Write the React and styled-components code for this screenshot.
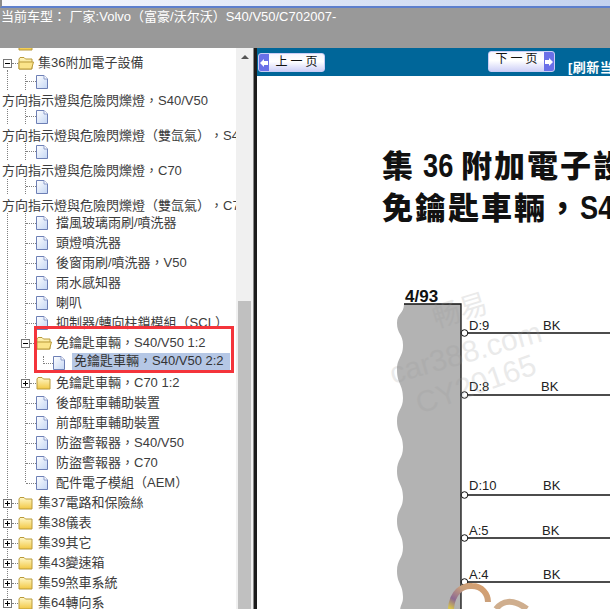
import React from 'react';
import styled, { createGlobalStyle } from 'styled-components';

const CJK = '"Liberation Sans", "Noto Sans CJK TC", sans-serif';

const GlobalStyle = createGlobalStyle`
  html, body { margin: 0; padding: 0; background: #fff; overflow: hidden; }
  #root { width: 610px; height: 609px; overflow: hidden; }
`;

const Page = styled.div`
  width: 610px;
  height: 609px;
  display: flex;
  flex-direction: column;
  overflow: hidden;
  font-family: ${CJK};
  text-spacing-trim: space-all;
`;

const TitleStrip = styled.div`
  height: 6px;
  flex: none;
  background: linear-gradient(90deg, #f8f9fd, #c3d2ef);
  border-bottom: 2px solid #5d7fcd;
  border-left: 2px solid #8a8a8a;
`;

const CarBar = styled.div`
  height: 40px;
  flex: none;
  background: #999;
  color: #fff;
  font-size: 13px;
  line-height: 18px;
  padding: 0 0 0 1px;
  white-space: pre;
`;

const Split = styled.div`
  flex: 1;
  min-height: 0;
  display: flex;
`;

const TreePane = styled.div`
  position: relative;
  width: 236px;
  flex: none;
  overflow: hidden;
  background: #fff;
`;

const Guide = styled.div`
  position: absolute;
  left: ${p => p.$x}px;
  top: ${p => p.$top}px;
  height: ${p => p.$height}px;
  border-left: 1px dotted #808080;
`;

const Row = styled.div`
  position: relative;
  height: ${p => p.$h || 20}px;
  display: flex;
  align-items: center;
  padding-left: ${p => p.$indent || 0}px;
  font-size: 13px;
  color: #3c3c3c;
  white-space: nowrap;
`;

const WrappedRow = styled(Row)`
  background: #fff;
`;

const TopRow = styled(Row)`
  margin-top: 2px;
`;

const ClippedRow = styled(Row)`
  align-items: flex-end;
  overflow: hidden;
  height: 3px;
  padding-left: 18px;
`;

const Expander = styled.span`
  position: relative;
  width: 9px;
  height: 9px;
  flex: none;
  box-sizing: border-box;
  border: 1px solid #777;
  background: #fff;
  &::before {
    content: '';
    position: absolute;
    left: 1px;
    right: 1px;
    top: 3px;
    height: 1px;
    background: #000;
  }
  &::after {
    content: '';
    display: ${p => (p.$open ? 'none' : 'block')};
    position: absolute;
    top: 1px;
    bottom: 1px;
    left: 3px;
    width: 1px;
    background: #000;
  }
`;

const Connector = styled.span`
  width: ${p => p.$w}px;
  flex: none;
  border-top: 1px dotted #808080;
`;

const Label = styled.span`
  margin-left: ${p => p.$gap ?? 4}px;
  padding-bottom: 4px;
`;

const Selected = styled.span`
  margin: 0 0 3px 7px;
  padding: 0 6px 0 2px;
  height: 17px;
  line-height: 15px;
  background: #b5c7e5;
  color: #333;
`;

const RedFrame = styled.div`
  position: absolute;
  left: 34px;
  top: 278px;
  width: 200px;
  height: 47px;
  box-sizing: border-box;
  border: 3px solid #f4343b;
`;

const ScrollTrack = styled.div`
  width: 17px;
  flex: none;
  background: #f0f0f0;
  display: flex;
  flex-direction: column;
  align-items: center;
  padding-top: 7px;
  box-sizing: border-box;
`;

const ScrollArrow = styled.div`
  width: 0;
  height: 0;
  border-left: 4px solid transparent;
  border-right: 4px solid transparent;
  border-bottom: 4px solid #555;
`;

const ScrollThumb = styled.div`
  width: 13px;
  margin-top: 242px;
  flex: 1;
  background: #c0c0c0;
`;

const Divider = styled.div`
  width: 4px;
  flex: none;
  background: #1c1c1c;
  border-left: 1px solid #888;
  box-sizing: border-box;
`;

const DocPane = styled.div`
  flex: 1;
  min-width: 0;
  display: flex;
  flex-direction: column;
  overflow: hidden;
`;

const NavBar = styled.div`
  height: 28px;
  flex: none;
  background: #006699;
  display: flex;
  align-items: flex-start;
  white-space: nowrap;
`;

const PageButton = styled.div`
  width: 67px;
  height: ${p => (p.$next ? 21 : 19)}px;
  margin: ${p => (p.$next ? '3px 0 0 163px' : '5px 0 0 1px')};
  flex: none;
  box-sizing: border-box;
  display: flex;
  flex-direction: ${p => (p.$next ? 'row-reverse' : 'row')};
  align-items: stretch;
  border: 1px solid #c9ccf5;
  border-radius: 3px;
  overflow: hidden;
  background: linear-gradient(#f6f6ff, #ffffff 45%, #cfd1f7);
  font-size: 12px;
  color: #111;
`;

const ArrowCap = styled.span`
  width: 10px;
  flex: none;
  background: #6a70e8;
  display: flex;
  align-items: center;
  justify-content: center;
`;

const ButtonText = styled.span`
  flex: 1;
  text-align: center;
  line-height: ${p => (p.$next ? 15 : 17)}px;
  letter-spacing: 3px;
  padding-left: 3px;
`;

const Refresh = styled.div`
  margin: 12px 0 0 13px;
  flex: none;
  font-size: 13px;
  line-height: 15px;
  font-weight: 700;
  color: #fff;
  letter-spacing: 0.5px;
`;

const Sheet = styled.div`
  position: relative;
  flex: 1;
  min-height: 0;
  background: #fff;
  padding: 67px 0 0 125px;
  overflow: hidden;
`;

const Heading = styled.div`
  font-family: "Noto Sans CJK TC", sans-serif;
  font-size: 31px;
  line-height: 42px;
  height: 42px;
  font-weight: 900;
  color: #111;
  white-space: nowrap;
  letter-spacing: 2px;
`;

const Condensed = styled.span`
  display: inline-block;
  width: ${p => p.$w}px;
  margin: ${p => p.$margin || 0};
  font-family: "Liberation Sans", sans-serif;
  font-size: 34px;
  line-height: 34px;
  font-weight: 700;
  letter-spacing: 0;
  transform: scaleX(0.8);
  transform-origin: left center;
`;

const Diagram = styled.svg`
  position: absolute;
  left: 0;
  top: 0;
`;

const IconDefs = () => (
  <svg width="0" height="0" style={{ position: 'absolute' }}>
    <defs>
      <linearGradient id="fold" x1="0" y1="0" x2="0" y2="1">
        <stop offset="0" stopColor="#fff8c8" />
        <stop offset="1" stopColor="#f2c844" />
      </linearGradient>
      <linearGradient id="page" x1="0" y1="0" x2="1" y2="1">
        <stop offset="0" stopColor="#ffffff" />
        <stop offset="1" stopColor="#c4d6f4" />
      </linearGradient>
      <linearGradient id="ring" x1="0" y1="1" x2="1" y2="0">
        <stop offset="0" stopColor="#d9c64a" />
        <stop offset="0.25" stopColor="#8d6a92" />
        <stop offset="0.6" stopColor="#c9a07c" />
        <stop offset="1" stopColor="#d99f6c" />
      </linearGradient>
    </defs>
  </svg>
);

const Folder = ({ open }) => (
  <svg width="16" height="14" viewBox="0 0 16 14" style={{ flex: 'none' }}>
    <path d="M1 3 L2 1.5 H6 L7.5 3 H14 V13 H1 Z" fill="url(#fold)" stroke="#b99a3a" />
    {open && <path d="M1 6 H15.5 L13.5 13 H1 Z" fill="#fbe48a" stroke="#b99a3a" />}
  </svg>
);

const DocIcon = () => (
  <svg width="12" height="14" viewBox="0 0 12 14" style={{ flex: 'none' }}>
    <path d="M.5.5 H8 L11.5 4 V13.5 H.5 Z" fill="url(#page)" stroke="#6d7fb5" />
    <path d="M8 .5 V4 H11.5" fill="#fff" stroke="#8c9ccb" />
  </svg>
);

const Leaf = ({ text }) => (
  <Row $indent={26}>
    <Connector $w={10} />
    <DocIcon />
    <Label $gap={8}>{text}</Label>
  </Row>
);

const Section = ({ text }) => (
  <Row $indent={3}>
    <Expander />
    <Connector $w={6} />
    <Folder />
    <Label>{text}</Label>
  </Row>
);

const OrphanIcon = () => (
  <Row $h={17} $indent={26}>
    <Connector $w={10} />
    <DocIcon />
  </Row>
);

const ArrowIcon = ({ flip }) => (
  <svg width="8" height="8" viewBox="0 0 8 8" style={flip ? { transform: 'scaleX(-1)' } : undefined}>
    <path d="M0 4 L4 0 V2 H8 V6 H4 V8 Z" fill="#fff" />
  </svg>
);

const leavesA = ['擋風玻璃雨刷/噴洗器', '頭燈噴洗器', '後窗雨刷/噴洗器，V50', '雨水感知器', '喇叭', '抑制器/轉向柱鎖模組（SCL）'];
const leavesB = ['後部駐車輔助裝置', '前部駐車輔助裝置', '防盜警報器，S40/V50', '防盜警報器，C70', '配件電子模組（AEM）'];
const sections = ['集37電路和保險絲', '集38儀表', '集39其它', '集43變速箱', '集59煞車系統', '集64轉向系'];
const wrapped = ['方向指示燈與危險閃爍燈，S40/V50', '方向指示燈與危險閃爍燈（雙氙氣），S40/V50', '方向指示燈與危險閃爍燈，C70', '方向指示燈與危險閃爍燈（雙氙氣），C70'];

const pins = [
  { y: 333, name: 'D:9', nameY: 330, bk: 543 },
  { y: 395, name: 'D:8', nameY: 391, bk: 541 },
  { y: 495, name: 'D:10', nameY: 490, bk: 543 },
  { y: 538, name: 'A:5', nameY: 535, bk: 542 },
  { y: 582, name: 'A:4', nameY: 579, bk: 543 },
];

// scalloped torn edge of the connector block, top to bottom
const edge = [[404, 304], [397, 323], [403, 345], [397, 370], [403, 398], [397, 421], [403, 447], [397, 471], [403, 497], [397, 521], [403, 547], [397, 571], [403, 597], [400, 612]];
const wave = edge.reduce((d, [x, y], i) => {
  if (i === 0) return `M${x} ${y}`;
  const [px, py] = edge[i - 1];
  const mid = (y - py) / 2;
  return `${d} C${px} ${py + mid} ${x} ${y - mid} ${x} ${y}`;
}, '') + ' H461 V304 Z';

export default function App() {
  return (
    <Page>
      <GlobalStyle />
      <IconDefs />
      <TitleStrip />
      <CarBar>当前车型： 厂家:Volvo（富豪/沃尔沃）S40/V50/C702007-</CarBar>
      <Split>
        <TreePane>
          <Guide $x={7} $top={22} $height={540} />
          <Guide $x={25} $top={27} $height={407} />
          <Guide $x={43} $top={308} $height={6} />
          <ClippedRow><Folder /></ClippedRow>
          <TopRow $h={20} $indent={3}>
            <Expander $open />
            <Connector $w={6} />
            <Folder open />
            <Label>集36附加電子設備</Label>
          </TopRow>
          {wrapped.map(text => (
            <React.Fragment key={text}>
              <OrphanIcon />
              <WrappedRow $h={18} $indent={2}>{text}</WrappedRow>
            </React.Fragment>
          ))}
          {leavesA.map(text => <Leaf key={text} text={text} />)}
          <Row $indent={21}>
            <Expander $open />
            <Connector $w={6} />
            <Folder open />
            <Label>免鑰匙車輛，S40/V50 1:2</Label>
          </Row>
          <Row $indent={43}>
            <Connector $w={10} />
            <DocIcon />
            <Selected>免鑰匙車輛，S40/V50 2:2</Selected>
          </Row>
          <Row $indent={21}>
            <Expander />
            <Connector $w={6} />
            <Folder />
            <Label>免鑰匙車輛，C70 1:2</Label>
          </Row>
          {leavesB.map(text => <Leaf key={text} text={text} />)}
          {sections.map(text => <Section key={text} text={text} />)}
          <RedFrame />
        </TreePane>
        <ScrollTrack>
          <ScrollArrow />
          <ScrollThumb />
        </ScrollTrack>
        <Divider />
        <DocPane>
          <NavBar>
            <PageButton>
              <ArrowCap><ArrowIcon /></ArrowCap>
              <ButtonText>上一页</ButtonText>
            </PageButton>
            <PageButton $next>
              <ArrowCap><ArrowIcon flip /></ArrowCap>
              <ButtonText $next>下一页</ButtonText>
            </PageButton>
            <Refresh>[刷新当前页]</Refresh>
          </NavBar>
          <Sheet>
            <Heading>集<Condensed $w={30} $margin="0 8px 0 8px">36</Condensed>附加電子設備</Heading>
            <Heading>免鑰匙車輛，<Condensed $w={120}>S40/V50</Condensed></Heading>
            <Diagram width="353" height="533" viewBox="257 76 353 533">
              <text x="405" y="302" fontFamily="Liberation Sans" fontWeight="700" fontSize="17" fill="#111">4/93</text>
              <path d={wave} fill="#b3b3b3" />
              <path d="M404 304 H461 V609" fill="none" stroke="#111" strokeWidth="1.3" />
              {pins.map(pin => (
                <g key={pin.name}>
                  <path d={`M465 ${pin.y} H610`} stroke="#111" strokeWidth="1.3" />
                  <circle cx="464.5" cy={pin.y} r="3.3" fill="#fff" stroke="#111" />
                  <text x="469" y={pin.nameY} fontFamily="Liberation Sans" fontSize="13" fill="#222">{pin.name}</text>
                  <text x={pin.bk} y={pin.nameY} fontFamily="Liberation Sans" fontSize="13" fill="#222">BK</text>
                </g>
              ))}
              <g fill="#999" opacity="0.2" fontFamily="Liberation Sans">
                <text x="436" y="328" fontFamily="Noto Sans CJK SC" fontSize="28" transform="rotate(-17 436 328)">畅易</text>
                <text x="393" y="384" fontSize="30" transform="rotate(-16 393 384)">car388.com</text>
                <text x="420" y="414" fontSize="30" transform="rotate(-19 420 414)">CY20165</text>
              </g>
              <path d="M451 609 C452 592 463 585 472 586 C482 586 488 594 488 602" fill="none" stroke="url(#ring)" strokeWidth="6" />
              <path d="M496 609 C502 601 512 598 527 609" fill="none" stroke="#cfae8e" strokeWidth="6" />
            </Diagram>
          </Sheet>
        </DocPane>
      </Split>
    </Page>
  );
}
